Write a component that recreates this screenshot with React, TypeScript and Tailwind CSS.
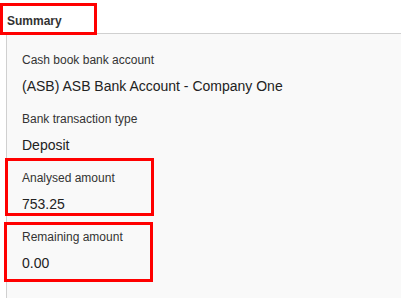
const fields = [
  { label: "Cash book bank account", value: "(ASB) ASB Bank Account - Company One" },
  { label: "Bank transaction type", value: "Deposit" },
  { label: "Analysed amount", value: "753.25" },
  { label: "Remaining amount", value: "0.00" },
];

function Field({ label, value }: { label: string; value: string }) {
  return (
    <div className="flex flex-col">
      <span className="mb-[11px] text-[12px] leading-[14px] text-[#333333]">{label}</span>
      <span className="text-[14px] leading-[17px] text-[#222222]">{value}</span>
    </div>
  );
}

export default function App() {
  return (
    <div className="relative flex h-[298px] w-[401px] flex-col overflow-hidden bg-white font-['Liberation_Sans',Arial,sans-serif]">
      <div className="px-[7px] pb-[5px] pt-[14px] text-[12px] font-bold leading-[14px] text-[#333333]">
        Summary
      </div>
      <div className="ml-[6px] flex flex-1 flex-col gap-[17px] border-l border-t border-[#d0d0d0] bg-[#f9f9f9] pl-[15px] pt-[19px]">
        {fields.map((f) => (
          <Field key={f.label} label={f.label} value={f.value} />
        ))}
      </div>

      {/* annotation boxes */}
      <div className="pointer-events-none absolute left-0 top-[3px] h-[32px] w-[97px] border-[3px] border-[#ff0000]" />
      <div className="pointer-events-none absolute left-[5px] top-[158px] h-[58px] w-[149px] border-[3px] border-[#ff0000]" />
      <div className="pointer-events-none absolute left-[4px] top-[222px] h-[60px] w-[149px] border-[3px] border-[#ff0000]" />
    </div>
  );
}
